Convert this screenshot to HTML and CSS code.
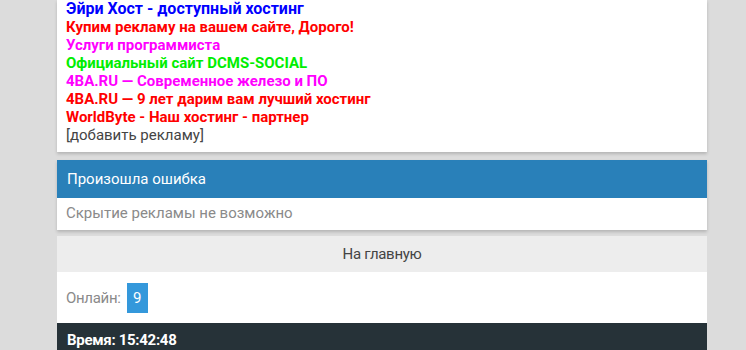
FILE: index.html
```html
<html>
	<head>
		<title>Ошибка</title>
		<meta name="viewport" content="width=device-width, initial-scale=1">
		<link rel="stylesheet" href="styles.css">
	</head>
	<body>

		<div class="wrap">

			<div class="card ads">
				<a href="#" class="ad blue big">Эйри Хост - доступный хостинг</a>
				<a href="#" class="ad red">Купим рекламу на вашем сайте, Дорого!</a>
				<a href="#" class="ad pink">Услуги программиста</a>
				<a href="#" class="ad green">Официальный сайт DCMS-SOCIAL</a>
				<a href="#" class="ad pink">4BA.RU — Современное железо и ПО</a>
				<a href="#" class="ad red">4BA.RU — 9 лет дарим вам лучший хостинг</a>
				<a href="#" class="ad red">WorldByte - Наш хостинг - партнер</a>
				<a href="#" class="addAd">[добавить рекламу]</a>
			</div>

			<div class="card error">
				<div class="errorTitle">Произошла ошибка</div>
				<div class="errorText">Скрытие рекламы не возможно</div>
			</div>

			<div class="card bottom">
				<a href="#" class="homeLink">На главную</a>
				<div class="online">
					Онлайн: <span class="badge">9</span>
				</div>
				<div class="footer">Время: 15:42:48</div>
			</div>

		</div>

	</body>
</html>
```

FILE: styles.css
```css
body
{
	margin: 0;
	background-color: #dcdcdc;
	font-family: Roboto, "Liberation Sans", sans-serif;
}

a { text-decoration: none; }

.wrap
{
	width: 650px;
	margin-left: 57px;
}

.card
{
	background-color: white;
	box-shadow: 0 2px 3px rgba(0, 0, 0, 0.18);
	margin-bottom: 6px;
}

.ads
{
	padding: 0 9px 8px 9px;
	margin-bottom: 8px;
}

.ad
{
	display: block;
	font-size: 15px;
	font-weight: bold;
	line-height: 18px;
}

.big { font-size: 16px; }

.blue { color: #0000ff; }
.red { color: #ff0000; }
.pink { color: #ff00ff; }
.green { color: #00ee00; }

.addAd
{
	display: block;
	font-size: 15px;
	line-height: 18px;
	color: #444;
}

.errorTitle
{
	background-color: #2980b9;
	color: white;
	font-size: 15px;
	height: 38px;
	line-height: 38px;
	padding-left: 10px;
}

.errorText
{
	color: #8a8a8a;
	font-size: 15px;
	height: 32px;
	line-height: 30px;
	padding-left: 9px;
}

.bottom
{
	box-shadow: none;
}

.homeLink
{
	display: block;
	background-color: #ededed;
	color: #444;
	font-size: 15px;
	letter-spacing: -0.3px;
	text-align: center;
	height: 36px;
	line-height: 37px;
}

.online
{
	display: flex;
	align-items: center;
	gap: 6px;
	height: 51px;
	padding-left: 9px;
	color: #8a8a8a;
	font-size: 15px;
	letter-spacing: -0.3px;
}

.badge
{
	display: inline-block;
	background-color: #3498db;
	color: white;
	width: 21px;
	height: 30px;
	line-height: 30px;
	text-align: center;
}

.footer
{
	background-color: #263238;
	color: white;
	font-size: 15px;
	font-weight: bold;
	letter-spacing: -0.3px;
	padding: 7px 0 0 10px;
	line-height: 20px;
}
```
